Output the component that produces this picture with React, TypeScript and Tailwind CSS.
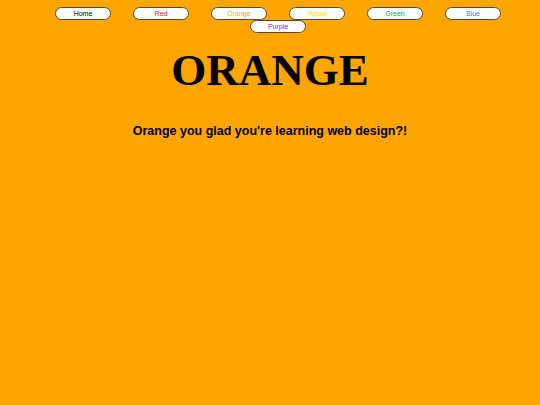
const links = [
  { label: "Home", color: "text-black" },
  { label: "Red", color: "text-[#e0201c]" },
  { label: "Orange", color: "text-[#ffa500]" },
  { label: "Yellow", color: "text-[#ffd700]" },
  { label: "Green", color: "text-[#2e9a3a]" },
  { label: "Blue", color: "text-[#2f80ed]" },
  { label: "Purple", color: "text-[#8a2be2]" },
];

export default function App() {
  return (
    <div className="min-h-[405px] bg-[#ffa500] font-['Liberation_Sans',Arial,sans-serif]">
      <nav className="flex flex-wrap justify-center pl-4 pt-[7px]">
        {links.map((l) => (
          <a
            key={l.label}
            href="#"
            className={`mx-[11px] flex h-[13px] w-[56px] items-center justify-center rounded-full border border-[#5a4a2a] bg-white text-[7px] leading-none ${l.color}`}
          >
            {l.label}
          </a>
        ))}
      </nav>
      <h1 className="mt-[11px] text-center font-['Liberation_Serif','Times_New_Roman',serif] text-[45px] font-bold leading-[52px] text-black">
        ORANGE
      </h1>
      <p className="mt-[26px] text-center text-[12.5px] font-bold leading-[1.5] text-black">
        Orange you glad you're learning web design?!
      </p>
    </div>
  );
}
